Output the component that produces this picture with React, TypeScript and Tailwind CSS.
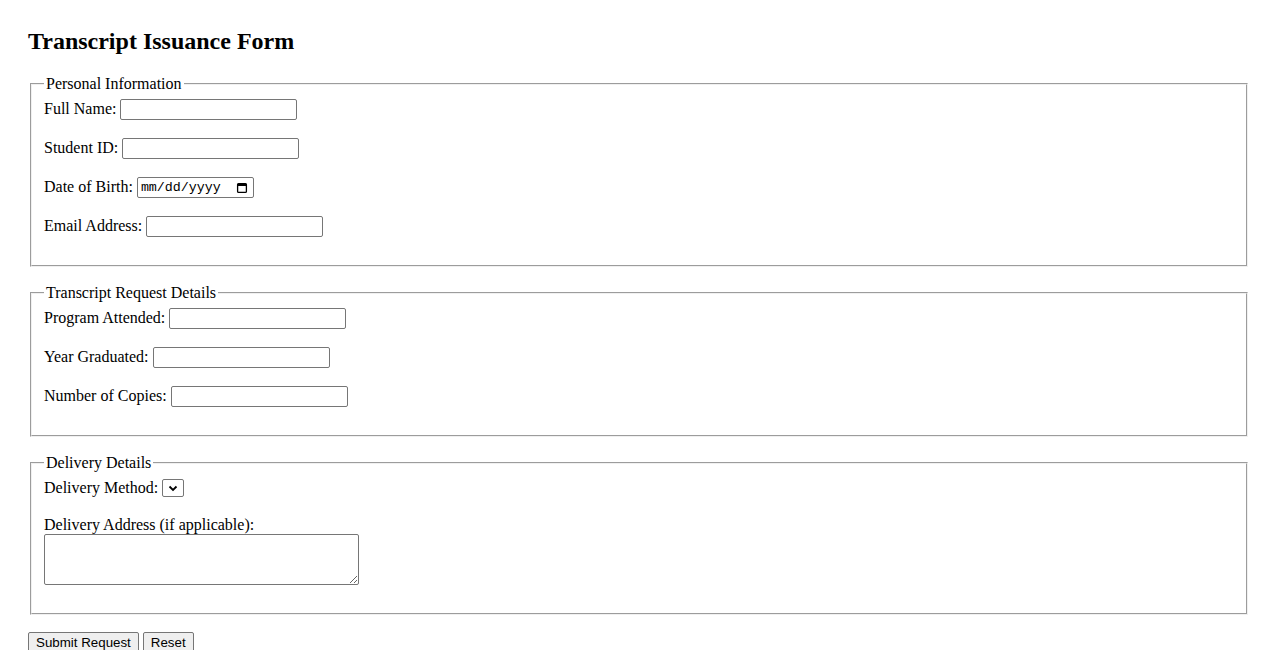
import React from 'react';

const control =
  "border border-[#767676] rounded-[2px] bg-white text-[13.33px] font-['Liberation_Sans',Arial,sans-serif] text-black outline-none";

function TextRow({ id, label, type = 'text' }: { id: string; label: string; type?: string }) {
  return (
    <div className="flex items-center h-[21px]">
      <label htmlFor={id} className="leading-[18.4px] whitespace-nowrap">
        {label}
      </label>
      <input id={id} type={type} className={`ml-[4px] w-[177px] h-[21px] px-[2px] ${control}`} />
    </div>
  );
}

function DateRow() {
  return (
    <div className="flex items-center h-[21px]">
      <label htmlFor="dob" className="leading-[18.4px] whitespace-nowrap">
        Date of Birth:
      </label>
      <div
        id="dob"
        className={`ml-[4px] w-[117px] h-[21px] pl-[3px] pr-[5px] flex items-center justify-between ${control}`}
      >
        <span className="font-['Liberation_Mono','Courier_New',monospace] text-[13.33px] leading-[15px]">
          mm/dd/yyyy
        </span>
        <svg width="12" height="12" viewBox="0 0 12 12" aria-hidden="true">
          <rect x="1.6" y="1.6" width="8.8" height="8.8" rx="1" fill="none" stroke="#000" strokeWidth="1.3" />
          <rect x="1.6" y="1.6" width="8.8" height="2.4" fill="#000" />
        </svg>
      </div>
    </div>
  );
}

function Section({ title, children }: { title: string; children: React.ReactNode }) {
  return (
    <fieldset className="mx-[2px] mb-[17px] [border:2px_groove_#f0f0f0] px-[12px] pt-[5.6px] pb-[28px]">
      <legend className="px-[2px] leading-[18.4px]">{title}</legend>
      {children}
    </fieldset>
  );
}

export default function App() {
  return (
    <div className="h-screen overflow-hidden bg-white px-[28px] pt-[28px] text-[16px] text-black font-['Liberation_Serif','Times_New_Roman',serif]">
      <h2 className="text-[24px] font-bold leading-[27px] mb-[20px]">Transcript Issuance Form</h2>

      <form onSubmit={(e) => e.preventDefault()}>
        {/* Personal */}
        <Section title="Personal Information">
          <div className="flex flex-col gap-[18px]">
            <TextRow id="fullName" label="Full Name:" />
            <TextRow id="studentId" label="Student ID:" />
            <DateRow />
            <TextRow id="email" label="Email Address:" type="email" />
          </div>
        </Section>

        {/* Request */}
        <Section title="Transcript Request Details">
          <div className="flex flex-col gap-[18px]">
            <TextRow id="program" label="Program Attended:" />
            <TextRow id="year" label="Year Graduated:" />
            <TextRow id="copies" label="Number of Copies:" />
          </div>
        </Section>

        {/* Delivery */}
        <Section title="Delivery Details">
          <div className="flex items-center h-[20px]">
            <label htmlFor="method" className="leading-[18.4px] whitespace-nowrap">
              Delivery Method:
            </label>
            <div className="relative ml-[4px] h-[18px]">
              <select id="method" className={`appearance-none block w-[22px] h-[18px] ${control}`}></select>
              <svg
                className="absolute left-[6px] top-[6px] pointer-events-none"
                width="10"
                height="7"
                viewBox="0 0 10 7"
                aria-hidden="true"
              >
                <path d="M1.5 1.5L5 5L8.5 1.5" fill="none" stroke="#000" strokeWidth="1.8" />
              </svg>
            </div>
          </div>
          <label htmlFor="address" className="block mt-[17.5px] leading-[18.4px]">
            Delivery Address (if applicable):
          </label>
          <textarea id="address" className={`block w-[315px] h-[51px] resize ${control}`}></textarea>
        </Section>

        <div className="flex gap-[4px] mt-[1px]">
          <button
            type="submit"
            className="h-[21px] px-[7px] border border-[#767676] rounded-[2px] bg-[#efefef] text-[13.33px] leading-[15px] font-['Liberation_Sans',Arial,sans-serif] text-black"
          >
            Submit Request
          </button>
          <button
            type="reset"
            className="h-[21px] px-[7px] border border-[#767676] rounded-[2px] bg-[#efefef] text-[13.33px] leading-[15px] font-['Liberation_Sans',Arial,sans-serif] text-black"
          >
            Reset
          </button>
        </div>
      </form>
    </div>
  );
}
